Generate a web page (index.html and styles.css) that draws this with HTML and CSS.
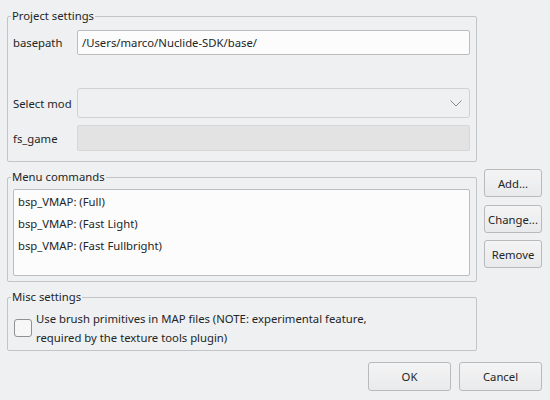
FILE: index.html
```html
<!DOCTYPE html>
<html>
<head>
<meta charset="utf-8">
<link rel="stylesheet" href="styles.css">
</head>
<body>
<div class="dialog">
  <div class="main">
    <fieldset class="group project">
      <legend>Project settings</legend>
      <div class="form">
        <label class="lbl">basepath</label>
        <div class="input">/Users/marco/Nuclide-SDK/base/</div>
        <div class="spacer"></div>
        <label class="lbl">Select mod</label>
        <div class="combo">
          <svg class="chev" width="12" height="7" viewBox="0 0 12 7"><path d="M0.5 0.5 L6 6 L11.5 0.5" fill="none" stroke="#8a8c8e" stroke-width="1"/></svg>
        </div>
        <label class="lbl">fs_game</label>
        <div class="input disabled"></div>
      </div>
    </fieldset>
    <div class="menu-row">
      <fieldset class="group menu">
        <legend>Menu commands</legend>
        <div class="list">
          <div class="item">bsp_VMAP: (Full)</div>
          <div class="item">bsp_VMAP: (Fast Light)</div>
          <div class="item">bsp_VMAP: (Fast Fullbright)</div>
        </div>
      </fieldset>
      <div class="side">
        <button class="btn side-btn">Add...</button>
        <button class="btn side-btn b-change">Change...</button>
        <button class="btn side-btn">Remove</button>
      </div>
    </div>
    <fieldset class="group misc">
      <legend>Misc settings</legend>
      <div class="check-row">
        <span class="checkbox"></span>
        <span class="check-text">Use brush primitives in MAP files (NOTE: experimental feature,<br>required by the texture tools plugin)</span>
      </div>
    </fieldset>
  </div>
  <div class="footer">
    <button class="btn foot-btn">OK</button>
    <button class="btn foot-btn">Cancel</button>
  </div>
</div>
</body>
</html>
```
FILE: styles.css
```css
html, body {
  margin: 0;
  padding: 0;
  background: #eff0f1;
}
body {
  width: 550px;
  height: 400px;
  overflow: hidden;
  font-family: "Noto Sans", "Open Sans", sans-serif;
  font-size: 11.3px;
  color: #232627;
}
.dialog {
  padding: 8px 8px 0 7px;
}
.main {
  display: flex;
  flex-direction: column;
  gap: 7px;
}
.group {
  width: 470px;
  box-sizing: border-box;
  margin: 0;
  border: 1px solid #c3c4c5;
  border-radius: 2px;
  padding: 0 6px 0 5px;
  min-width: 0;
}
.group legend {
  padding: 0 1px;
  margin-left: -2px;
  line-height: 16px;
  height: 16px;
}
.project {
  padding-top: 6px;
  padding-bottom: 10px;
}
.form {
  display: grid;
  grid-template-columns: 58px 1fr;
  column-gap: 6px;
  row-gap: 7px;
  align-items: center;
}
.lbl {
  white-space: nowrap;
}
.spacer {
  grid-column: 1 / 3;
  height: 19px;
}
.input {
  height: 23px;
  border: 1px solid #bcbdbf;
  border-radius: 2px;
  background: #fcfcfc;
  line-height: 23px;
  padding-left: 4px;
}
.input.disabled {
  height: 24px;
  background: #e3e3e4;
  border-color: #d6d7d8;
}
.combo {
  height: 28px;
  border: 1px solid #d0d1d2;
  border-radius: 3px;
  background: #eff0f1;
  display: flex;
  align-items: center;
  justify-content: flex-end;
  padding-right: 7px;
}
.menu-row {
  display: flex;
  gap: 7px;
  align-items: flex-start;
}
.menu {
  padding-top: 4px;
  padding-bottom: 5px;
}
.list {
  height: 84px;
  border: 1px solid #bcbdbf;
  border-radius: 2px;
  background: #fcfcfc;
  padding-top: 1px;
  box-sizing: content-box;
}
.item {
  height: 22px;
  line-height: 22px;
  padding-left: 4px;
}
.misc {
  padding-top: 4px;
  padding-bottom: 3px;
}
.check-row {
  display: flex;
  align-items: center;
  gap: 4px;
  padding-left: 1px;
}
.checkbox {
  flex: none;
  width: 16px;
  height: 16px;
  border: 1px solid #8f9194;
  border-radius: 3px;
  background: #f7f7f8;
}
.check-text {
  line-height: 19px;
}
.side {
  display: flex;
  flex-direction: column;
  gap: 7px;
}
.btn {
  font-family: inherit;
  font-size: 11.3px;
  color: #232627;
  border: 1px solid #b9babc;
  border-radius: 3px;
  background: linear-gradient(#f4f4f5, #e9eaeb);
  padding: 0;
  margin: 0;
}
.side-btn {
  width: 58px;
  height: 28px;
}
.b-change { margin-top: 1px; }
.footer {
  display: flex;
  justify-content: flex-end;
  gap: 8px;
  margin-top: 11px;
}
.foot-btn {
  width: 83px;
  height: 29px;
}
```
